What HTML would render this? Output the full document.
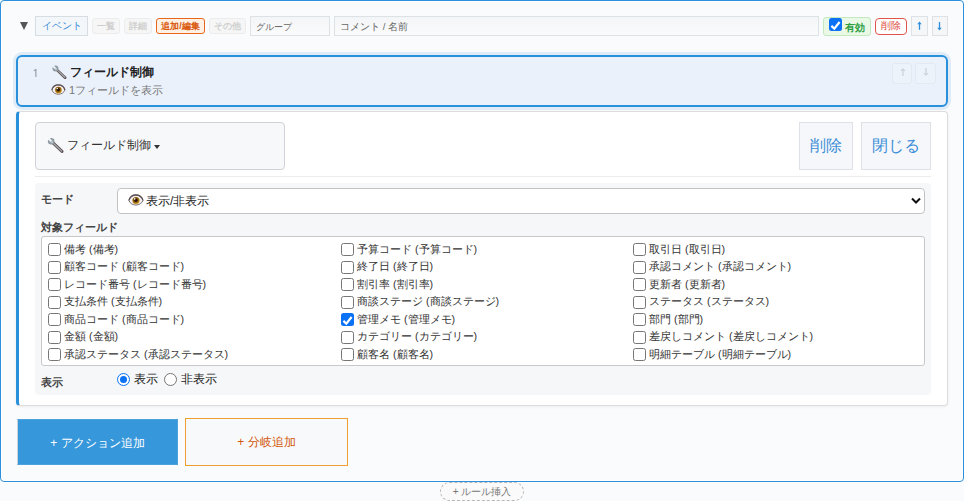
<!DOCTYPE html>
<html><head><meta charset="utf-8">
<style>
*{box-sizing:border-box;margin:0;padding:0}
html,body{width:964px;height:501px;overflow:hidden;background:#fafbfd;font-family:"Liberation Sans",sans-serif;color:#333}
.a{position:absolute}
.fc{display:flex;align-items:center;justify-content:center;white-space:nowrap}
#outer{left:0;top:0;width:964px;height:482px;border:1px solid #2e90dc;border-radius:4px;background:#fafbfd;box-shadow:inset 0 0 0 1px #fff,0 1px 0 #fff}
.tag{font-size:9px;font-weight:bold;border-radius:3px}
.inp{border:1px solid #dce2e5;background:linear-gradient(#f3f5f6,#fbfbfc);font-size:9.5px;color:#666;padding-left:5px;padding-top:2px;display:flex;align-items:center}
.cb{position:absolute;width:13px;height:13px;border:1px solid #767676;border-radius:2.5px;background:#fff}
.cbx{position:absolute;width:13px;height:13px;border-radius:2.5px;background:#0b72f5}
.lbl{position:absolute;font-size:10.7px;color:#333;white-space:nowrap;line-height:14px}
</style></head><body>
<div id="outer" class="a"></div>

<!-- header row -->
<div class="a" style="left:20px;top:22px;width:0;height:0;border-left:4.5px solid transparent;border-right:4.5px solid transparent;border-top:8px solid #555"></div>
<div class="a fc" style="left:35px;top:16px;width:53px;height:20px;border:1px solid #d6dde3;background:#f4f7fa;color:#3b8ed8;font-size:9.5px">イベント</div>
<div class="a fc tag" style="left:92px;top:18px;width:28px;height:16px;border:1px solid #ececec;background:#f6f6f6;color:#cfcfcf">一覧</div>
<div class="a fc tag" style="left:124px;top:18px;width:28px;height:16px;border:1px solid #ececec;background:#f6f6f6;color:#cfcfcf">詳細</div>
<div class="a fc tag" style="left:156px;top:18px;width:49px;height:16px;border:1px solid #e8651a;background:#fff1e4;color:#d9580c">追加/編集</div>
<div class="a fc tag" style="left:209px;top:18px;width:37px;height:16px;border:1px solid #ececec;background:#f6f6f6;color:#cfcfcf">その他</div>
<div class="a inp" style="left:250px;top:16px;width:80px;height:20px;font-size:9px;padding-left:4.5px">グループ</div>
<div class="a inp" style="left:334px;top:16px;width:485px;height:20px">コメント / 名前</div>
<div class="a" style="left:823px;top:17px;width:48px;height:19px;border:1px solid #c4e8c0;background:#e9f9e6;border-radius:3px"></div>
<div class="cbx" style="left:829px;top:18px"><svg width="13" height="13" viewBox="0 0 13 13"><path d="M2.4 6.9 L5.3 9.7 L10.6 3" fill="none" stroke="#fff" stroke-width="2.2"/></svg></div>
<div class="a" style="left:845px;top:19.5px;font-size:10px;font-weight:bold;color:#2f9e44;line-height:16px">有効</div>
<div class="a fc" style="left:875px;top:18px;width:32px;height:17px;border:1px solid #e0544a;background:#fff;border-radius:4px;color:#e0483a;font-size:10px;padding-bottom:1px">削除</div>
<div class="a" style="left:911px;top:16px;width:17px;height:20px;border:1px solid #dde2e6;background:#f4f6f8"></div><svg class="a" style="left:916px;top:21px" width="7" height="9" viewBox="0 0 7 9"><path d="M3.5 2.5V8.8" stroke="#2f8fdb" stroke-width="1.3"/><path d="M1.3 3.3L3.5 0.5L5.7 3.3Z" fill="#2f8fdb"/></svg>
<div class="a" style="left:932px;top:16px;width:16px;height:20px;border:1px solid #dde2e6;background:#f4f6f8"></div><svg class="a" style="left:936.2px;top:22px" width="7" height="9" viewBox="0 0 7 9"><path d="M3.5 0V6.5" stroke="#2f8fdb" stroke-width="1.3"/><path d="M1.3 5.7L3.5 8.6L5.7 5.7Z" fill="#2f8fdb"/></svg>

<!-- rule card -->
<div class="a" style="left:16px;top:55px;width:932px;height:52px;border:2px solid #2990dc;border-radius:6px;background:#eaf1fb;box-shadow:0 0 0 3px rgba(47,138,216,0.13)"></div>
<svg class="a" style="left:33px;top:69px" width="5" height="8" viewBox="0 0 5 8"><path d="M0.8 1.9 L2.9 0.4 V8" fill="none" stroke="#8d9a9c" stroke-width="1.1"/></svg>
<svg class="a" style="left:49px;top:62.2px" width="21.6" height="19.8" viewBox="0 0 24 22"><line x1="8.2" y1="8.2" x2="18" y2="17.4" stroke="#5b4a4a" stroke-width="3" stroke-linecap="round"/><line x1="8.2" y1="8.2" x2="17.6" y2="17" stroke="#a3aeb5" stroke-width="1.3" stroke-linecap="round"/><circle cx="7.2" cy="7.2" r="3.3" fill="#8e9aa2"/><circle cx="7.8" cy="7.8" r="1.5" fill="#b5c0c6"/><rect x="-1.1" y="-5" width="2.2" height="5" rx="0.6" transform="translate(7.2,7.2) rotate(-45)" fill="#eaf1fb"/></svg>
<div class="a" style="left:70px;top:64px;font-size:12px;font-weight:bold;color:#222;line-height:16px">フィールド制御</div>
<svg class="a" style="left:51.4px;top:83.6px" width="14.88" height="11.16" viewBox="0 0 16 12"><defs><radialGradient id="eg1" cx="0.45" cy="0.4" r="0.6"><stop offset="0" stop-color="#3a2008"/><stop offset="0.45" stop-color="#7a4a0c"/><stop offset="1" stop-color="#d29a14"/></radialGradient></defs><path d="M0.9 6.4 C3 -0.8 12.8 -0.8 15 6.4 C12.8 12.6 3 12.6 0.9 6.4 Z" fill="#f4f1f2" stroke="#7a6e72" stroke-width="1"/><path d="M0.9 6.4 C3 -0.8 12.8 -0.8 15 6.4" fill="none" stroke="#5e5256" stroke-width="1.3"/><circle cx="8" cy="6.5" r="3.6" fill="url(#eg1)"/><circle cx="8" cy="6.3" r="1.5" fill="#24140a"/><circle cx="6.7" cy="4.9" r="0.8" fill="#fff"/></svg>
<div class="a" style="left:69px;top:83px;font-size:11px;color:#777;line-height:14px">1フィールドを表示</div>
<div class="a" style="left:892px;top:63px;width:20px;height:21px;border:1px solid #e3e9f2;border-radius:3px;background:#edf3fb"></div><svg class="a" style="left:899.5px;top:68px" width="6" height="8" viewBox="0 0 6 8"><path d="M3 0.8V8M0.8 3L3 0.8L5.2 3" fill="none" stroke="#c3c9d1" stroke-width="1"/></svg>
<div class="a" style="left:915px;top:63px;width:21px;height:21px;border:1px solid #e3e9f2;border-radius:3px;background:#edf3fb"></div><svg class="a" style="left:922.5px;top:68px" width="6" height="8" viewBox="0 0 6 8"><path d="M3 0V7.2M0.8 5L3 7.2L5.2 5" fill="none" stroke="#c3c9d1" stroke-width="1"/></svg>

<!-- panel -->
<div class="a" style="left:16px;top:111px;width:932px;height:295px;border:1px solid #dcdcdc;border-left:3px solid #2990dc;border-radius:4px;background:#fff;box-shadow:0 1px 3px rgba(0,0,0,0.06)"></div>
<div class="a" style="left:35px;top:122px;width:250px;height:48px;border:1px solid #cfd2d6;border-radius:4px;background:#f7f8fa"></div>
<svg class="a" style="left:44px;top:134px" width="24.0" height="22.0" viewBox="0 0 24 22"><line x1="8.2" y1="8.2" x2="18" y2="17.4" stroke="#5b4a4a" stroke-width="3" stroke-linecap="round"/><line x1="8.2" y1="8.2" x2="17.6" y2="17" stroke="#a3aeb5" stroke-width="1.3" stroke-linecap="round"/><circle cx="7.2" cy="7.2" r="3.3" fill="#8e9aa2"/><circle cx="7.8" cy="7.8" r="1.5" fill="#b5c0c6"/><rect x="-1.1" y="-5" width="2.2" height="5" rx="0.6" transform="translate(7.2,7.2) rotate(-45)" fill="#f7f8fa"/></svg>
<div class="a" style="left:67px;top:137px;font-size:11.5px;color:#333;line-height:16px">フィールド制御</div>
<div class="a" style="left:154px;top:145px;width:0;height:0;border-left:3.5px solid transparent;border-right:3.5px solid transparent;border-top:4px solid #333"></div>
<div class="a fc" style="left:799px;top:122px;width:54px;height:48px;border:1px solid #dde1e5;background:#f5f7fa;color:#3b8ed8;font-size:16px">削除</div>
<div class="a fc" style="left:861px;top:122px;width:70px;height:48px;border:1px solid #dde1e5;background:#f5f7fa;color:#3b8ed8;font-size:16px">閉じる</div>
<div class="a" style="left:35px;top:176px;width:896px;height:1px;background:#ececec"></div>

<!-- gray section -->
<div class="a" style="left:35px;top:183px;width:896px;height:212px;background:#f6f7f9;border-radius:4px"></div>
<div class="a" style="left:41px;top:192px;font-size:11px;font-weight:bold;color:#444;line-height:14px">モード</div>
<div class="a" style="left:117px;top:188px;width:808px;height:26px;border:1px solid #c3c3c3;border-radius:4px;background:#fff"></div>
<svg class="a" style="left:127.5px;top:194px" width="16.00" height="12.00" viewBox="0 0 16 12"><defs><radialGradient id="eg2" cx="0.45" cy="0.4" r="0.6"><stop offset="0" stop-color="#3a2008"/><stop offset="0.45" stop-color="#7a4a0c"/><stop offset="1" stop-color="#d29a14"/></radialGradient></defs><path d="M0.9 6.4 C3 -0.8 12.8 -0.8 15 6.4 C12.8 12.6 3 12.6 0.9 6.4 Z" fill="#f4f1f2" stroke="#7a6e72" stroke-width="1"/><path d="M0.9 6.4 C3 -0.8 12.8 -0.8 15 6.4" fill="none" stroke="#5e5256" stroke-width="1.3"/><circle cx="8" cy="6.5" r="3.6" fill="url(#eg2)"/><circle cx="8" cy="6.3" r="1.5" fill="#24140a"/><circle cx="6.7" cy="4.9" r="0.8" fill="#fff"/></svg>
<div class="a" style="left:146px;top:193px;font-size:12px;color:#222;line-height:16px">表示/非表示</div>
<svg class="a" style="left:910px;top:196px" width="12" height="10" viewBox="0 0 12 10"><path d="M2 2.5 L6 6.5 L10 2.5" fill="none" stroke="#111" stroke-width="2"/></svg>
<div class="a" style="left:41px;top:220px;font-size:11px;font-weight:bold;color:#444;line-height:14px">対象フィールド</div>
<div class="a" style="left:41px;top:236px;width:884px;height:130px;border:1px solid #c8c8c8;border-radius:3px;background:#fff"></div>

<div class="cb" style="left:48px;top:243.0px"></div>
<div class="lbl" style="left:64px;top:241.5px">備考 (備考)</div>
<div class="cb" style="left:48px;top:260.5px"></div>
<div class="lbl" style="left:64px;top:259.0px">顧客コード (顧客コード)</div>
<div class="cb" style="left:48px;top:278.0px"></div>
<div class="lbl" style="left:64px;top:276.5px">レコード番号 (レコード番号)</div>
<div class="cb" style="left:48px;top:295.5px"></div>
<div class="lbl" style="left:64px;top:294.0px">支払条件 (支払条件)</div>
<div class="cb" style="left:48px;top:313.0px"></div>
<div class="lbl" style="left:64px;top:311.5px">商品コード (商品コード)</div>
<div class="cb" style="left:48px;top:330.5px"></div>
<div class="lbl" style="left:64px;top:329.0px">金額 (金額)</div>
<div class="cb" style="left:48px;top:348.0px"></div>
<div class="lbl" style="left:64px;top:346.5px">承認ステータス (承認ステータス)</div>
<div class="cb" style="left:341px;top:243.0px"></div>
<div class="lbl" style="left:357px;top:241.5px">予算コード (予算コード)</div>
<div class="cb" style="left:341px;top:260.5px"></div>
<div class="lbl" style="left:357px;top:259.0px">終了日 (終了日)</div>
<div class="cb" style="left:341px;top:278.0px"></div>
<div class="lbl" style="left:357px;top:276.5px">割引率 (割引率)</div>
<div class="cb" style="left:341px;top:295.5px"></div>
<div class="lbl" style="left:357px;top:294.0px">商談ステージ (商談ステージ)</div>
<div class="cbx" style="left:341px;top:313.0px"><svg width="13" height="13" viewBox="0 0 13 13"><path d="M2.4 6.9 L5.3 9.7 L10.6 3" fill="none" stroke="#fff" stroke-width="2.2"/></svg></div>
<div class="lbl" style="left:357px;top:311.5px">管理メモ (管理メモ)</div>
<div class="cb" style="left:341px;top:330.5px"></div>
<div class="lbl" style="left:357px;top:329.0px">カテゴリー (カテゴリー)</div>
<div class="cb" style="left:341px;top:348.0px"></div>
<div class="lbl" style="left:357px;top:346.5px">顧客名 (顧客名)</div>
<div class="cb" style="left:633px;top:243.0px"></div>
<div class="lbl" style="left:649px;top:241.5px">取引日 (取引日)</div>
<div class="cb" style="left:633px;top:260.5px"></div>
<div class="lbl" style="left:649px;top:259.0px">承認コメント (承認コメント)</div>
<div class="cb" style="left:633px;top:278.0px"></div>
<div class="lbl" style="left:649px;top:276.5px">更新者 (更新者)</div>
<div class="cb" style="left:633px;top:295.5px"></div>
<div class="lbl" style="left:649px;top:294.0px">ステータス (ステータス)</div>
<div class="cb" style="left:633px;top:313.0px"></div>
<div class="lbl" style="left:649px;top:311.5px">部門 (部門)</div>
<div class="cb" style="left:633px;top:330.5px"></div>
<div class="lbl" style="left:649px;top:329.0px">差戻しコメント (差戻しコメント)</div>
<div class="cb" style="left:633px;top:348.0px"></div>
<div class="lbl" style="left:649px;top:346.5px">明細テーブル (明細テーブル)</div>

<div class="a" style="left:41px;top:375px;font-size:11px;font-weight:bold;color:#444;line-height:14px">表示</div>
<div class="a" style="left:117px;top:373px;width:13px;height:13px;border-radius:50%;border:1.5px solid #0b72f5;background:#fff"><div style="position:absolute;left:1.5px;top:1.5px;width:7px;height:7px;border-radius:50%;background:#0b72f5"></div></div>
<div class="a" style="left:134px;top:371px;font-size:12px;color:#222;line-height:16px">表示</div>
<div class="a" style="left:164px;top:373px;width:13px;height:13px;border-radius:50%;border:1px solid #767676;background:#fff"></div>
<div class="a" style="left:181px;top:371px;font-size:12px;color:#222;line-height:16px">非表示</div>

<!-- bottom buttons -->
<div class="a fc" style="left:17px;top:419px;width:161px;height:46px;background:#3797db;border:1px solid #4da2de;border-left-color:#c9d3dc;color:#fff;font-size:12px;padding-top:2px">+ アクション追加</div>
<div class="a fc" style="left:185px;top:418px;width:163px;height:48px;background:#f8f9fa;border:1px solid #f0a030;color:#d2580c;font-size:12px;padding-top:1px">+ 分岐追加</div>

<div class="a fc" style="left:440px;top:482px;width:84px;height:19px;border:1px dashed #b8b8b8;border-radius:10px;background:#fafafa;color:#777;font-size:10px">+ ルール挿入</div>
</body></html>
